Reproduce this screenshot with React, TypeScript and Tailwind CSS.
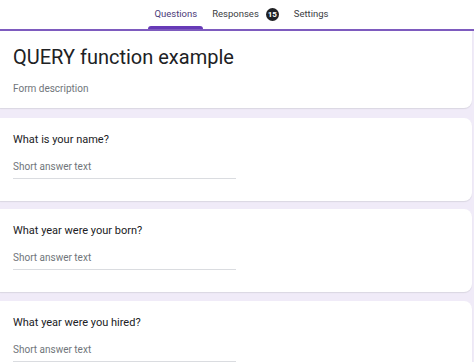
import React from 'react';

const questions = [
  { title: 'What is your name?', gap: 'mt-[10px]' },
  { title: 'What year were your born?', gap: 'mt-[8px]' },
  { title: 'What year were you hired?', gap: 'mt-[9px]' },
];

const QuestionCard: React.FC<{ title: string; gap: string }> = ({ title, gap }) => (
  <div className={`${gap} mr-[2px] h-[83px] shrink-0 rounded-r-lg bg-white px-[13px] pt-[15px] shadow-[0_1px_1px_rgba(60,64,67,0.12)]`}>
    <p className="text-[11px] leading-[14px] text-[#202124]">{title}</p>
    <div className="mt-[6px] w-[223px] border-b border-[#dadce0] pb-[1px]">
      <span className="text-[10px] leading-[13px] text-[#70757a]">Short answer text</span>
    </div>
  </div>
);

export default function App() {
  return (
    <div
      className="flex h-[362px] w-[474px] flex-col overflow-hidden bg-[#f0ebf8]"
      style={{ fontFamily: 'Roboto, "Liberation Sans", sans-serif' }}
    >
      <div className="flex h-[29px] shrink-0 justify-center bg-white pl-[3px]">
        <div className="flex h-full items-center text-[9.5px] text-[#3c4043]">
          <div className="relative flex h-full items-center px-[6px] text-[#4a3a78]">
            Questions
            <span className="absolute bottom-0 left-0 right-0 h-[3px] rounded-t-sm bg-[#673ab7]" />
          </div>
          <div className="ml-[9px] flex items-center gap-[7px]">
            Responses
            <span className="flex h-[13px] w-[13px] items-center justify-center rounded-full bg-[#202124] text-[8px] font-bold text-white">
              15
            </span>
          </div>
          <div className="ml-[15px]">Settings</div>
        </div>
      </div>
      <div className="h-[2px] shrink-0 bg-[#7e5bbf]" />

      <div className="mr-[2px] h-[77px] shrink-0 rounded-br-lg bg-white px-[13px] pt-[13px] shadow-[0_1px_1px_rgba(60,64,67,0.12)]">
        <h1 className="text-[20px] leading-[26px] text-[#202124]">QUERY function example</h1>
        <p className="mt-[12px] text-[10px] leading-[13px] text-[#70757a]">Form description</p>
      </div>

      {questions.map((q) => (
        <QuestionCard key={q.title} title={q.title} gap={q.gap} />
      ))}
    </div>
  );
}
